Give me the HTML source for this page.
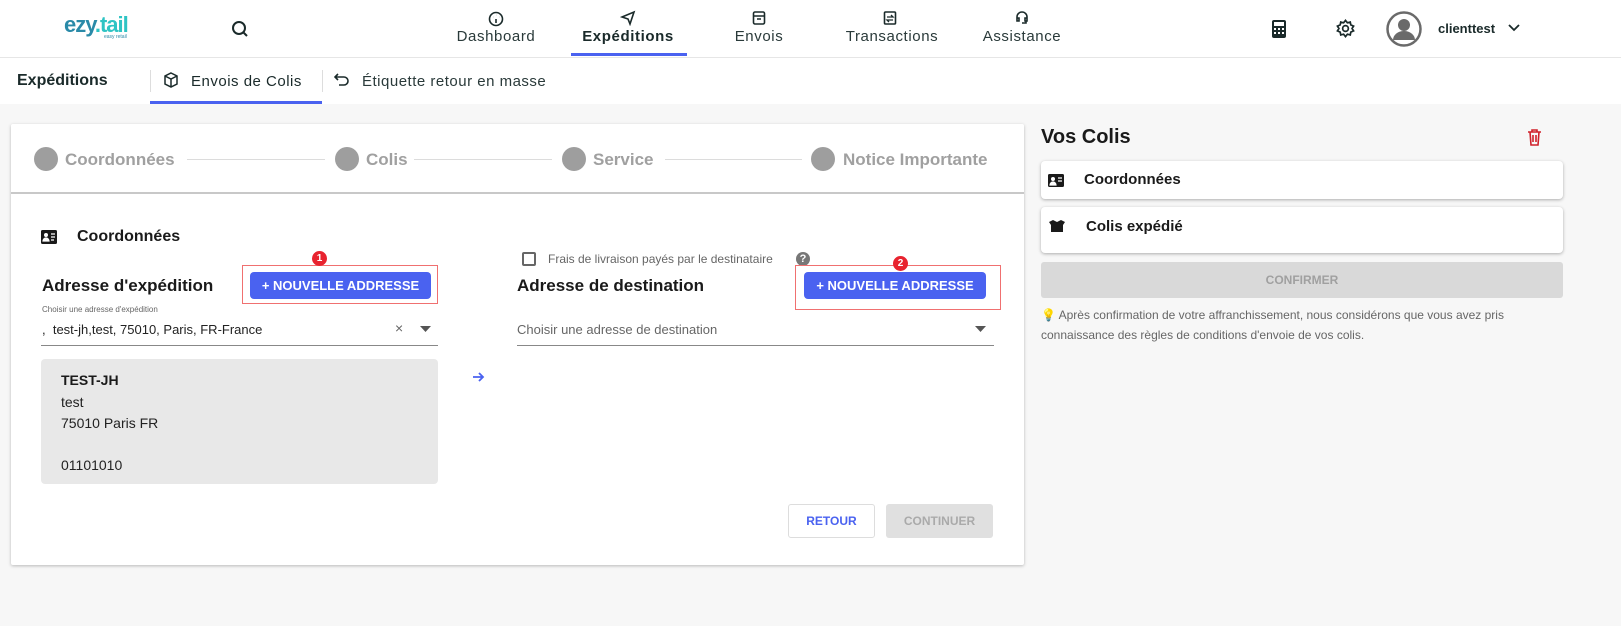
<!DOCTYPE html>
<html><head><meta charset="utf-8"><style>
*{box-sizing:border-box;margin:0;padding:0}
body{width:1621px;height:626px;background:#f7f7f7;font-family:"Liberation Sans",sans-serif;position:relative;overflow:hidden;color:#1a1a1a}
.a{position:absolute}
.hdr{left:0;top:0;width:1621px;height:58px;background:#fff;border-bottom:1px solid #e6e6e6}
.sub{left:0;top:58px;width:1621px;height:46px;background:#fff}
.nav{font-size:15px;color:#2a3a3a;letter-spacing:.6px;text-align:center}
.card{left:11px;top:124px;width:1013px;height:441px;background:#fff;box-shadow:0 1px 3px rgba(0,0,0,.25);border-radius:2px}
.dot{width:24px;height:24px;border-radius:50%;background:#9e9e9e}
.st{font-size:17px;font-weight:bold;color:#a0a0a0}
.ln{height:1px;background:#dcdcdc}
.btn{background:#4a62f0;color:#fff;font-size:13px;font-weight:bold;border-radius:4px;text-align:center;line-height:27px}
.red{border:1px solid #f07070}
.badge{width:15px;height:15px;border-radius:50%;background:#e8232f;color:#fff;font-size:10px;font-weight:bold;text-align:center;line-height:15px}
.rc{background:#fff;border-radius:4px;box-shadow:0 1px 3px rgba(0,0,0,.3)}
</style></head><body>
<div class="a hdr"></div>
<div class="a" style="left:64px;top:12px;font-size:22px;font-weight:bold;color:#2a8aa8;letter-spacing:-1px">ezy<span style="color:#2ec4c4">.tail</span></div>
<div class="a" style="left:104px;top:34px;font-size:5px;color:#2a8aa8">easy retail</div>
<svg class="a" style="left:231px;top:20px" width="18" height="18" viewBox="0 0 18 18"><circle cx="8" cy="8" r="6" fill="none" stroke="#1a2a2a" stroke-width="2"/><path d="M12 12l4 4" stroke="#1a2a2a" stroke-width="2"/></svg>
<div class="a nav" style="left:453px;top:28px;width:86px">Dashboard</div>
<svg class="a" style="left:488px;top:11px" width="16" height="16"><circle cx="8" cy="8" r="6.5" fill="none" stroke="#1a2a2a" stroke-width="1.6"/><path d="M8 8v4M5 6h.1M11 6h.1M8 4h.1" stroke="#1a2a2a" stroke-width="1.6"/></svg>
<div class="a nav" style="left:572px;top:28px;width:112px;font-weight:bold;color:#1a2a2a">Expéditions</div>
<svg class="a" style="left:620px;top:10px" width="16" height="16"><path d="M2 7L14 2 10 14 8 9Z" fill="none" stroke="#1a2a2a" stroke-width="1.6"/></svg>
<div class="a" style="left:571px;top:53px;width:116px;height:3px;background:#4a62f0"></div>
<div class="a nav" style="left:726px;top:28px;width:66px">Envois</div>
<svg class="a" style="left:752px;top:10px" width="14" height="16"><rect x="1.5" y="2" width="11" height="12" rx="1.5" fill="none" stroke="#1a2a2a" stroke-width="1.6"/><path d="M2 6h10M5 9h4" stroke="#1a2a2a" stroke-width="1.5"/></svg>
<div class="a nav" style="left:840px;top:28px;width:104px">Transactions</div>
<svg class="a" style="left:883px;top:10px" width="14" height="16"><rect x="1.5" y="2" width="11" height="12" rx="1" fill="none" stroke="#1a2a2a" stroke-width="1.6"/><path d="M4 7h6l-2-2M10 10H4l2 2" fill="none" stroke="#1a2a2a" stroke-width="1.3"/></svg>
<div class="a nav" style="left:978px;top:28px;width:88px">Assistance</div>
<svg class="a" style="left:1014px;top:10px" width="16" height="16"><path d="M3 10V7a5 5 0 0110 0v3M3 8h2v3H3zM11 8h2v3h-2zM12 11v2H8" fill="none" stroke="#1a2a2a" stroke-width="1.6"/></svg>
<svg class="a" style="left:1271px;top:19px" width="16" height="20"><rect x="1" y="1" width="14" height="18" rx="2" fill="#1a2a2a"/><rect x="3" y="3" width="10" height="4" fill="#fff"/><g fill="#fff"><rect x="3" y="9" width="2" height="2"/><rect x="7" y="9" width="2" height="2"/><rect x="11" y="9" width="2" height="2"/><rect x="3" y="13" width="2" height="2"/><rect x="7" y="13" width="2" height="2"/><rect x="11" y="13" width="2" height="2"/></g></svg>
<svg class="a" style="left:1336px;top:19px" width="19" height="19" viewBox="0 0 20 20"><path d="M10 1.5l2 2.5 3-.8.6 3 2.9 1.3-1.6 2.5 1.6 2.5-2.9 1.3-.6 3-3-.8-2 2.5-2-2.5-3 .8-.6-3L1.5 12.5 3.1 10 1.5 7.5l2.9-1.3.6-3 3 .8z" fill="none" stroke="#1a2a2a" stroke-width="1.8"/><circle cx="10" cy="10" r="3" fill="none" stroke="#1a2a2a" stroke-width="1.8"/></svg>
<svg class="a" style="left:1386px;top:11px" width="36" height="36"><circle cx="18" cy="18" r="16.5" fill="#fff" stroke="#6a6a6a" stroke-width="2.5"/><circle cx="18" cy="14" r="6" fill="#6a6a6a"/><path d="M7 29a11 9 0 0122 0z" fill="#6a6a6a"/></svg>
<div class="a" style="left:1438px;top:21px;font-size:13px;font-weight:bold;color:#1a2a2a">clienttest</div>
<svg class="a" style="left:1507px;top:23px" width="14" height="10"><path d="M2 2l5 5 5-5" fill="none" stroke="#1a2a2a" stroke-width="1.8"/></svg>

<div class="a sub"></div>
<div class="a" style="left:17px;top:72px;font-size:16px;font-weight:bold;color:#1a2a2a">Expéditions</div>
<div class="a" style="left:150px;top:70px;width:1px;height:22px;background:#ddd"></div>
<svg class="a" style="left:163px;top:72px" width="16" height="16"><path d="M8 1l6 3v8l-6 3-6-3V4zM2 4l6 3 6-3M8 7v8" fill="none" stroke="#1a2a2a" stroke-width="1.5"/></svg>
<div class="a" style="left:191px;top:73px;font-size:15px;color:#1a2a2a;letter-spacing:.5px">Envois de Colis</div>
<div class="a" style="left:150px;top:101px;width:172px;height:3px;background:#4a62f0"></div>
<div class="a" style="left:322px;top:70px;width:1px;height:22px;background:#ddd"></div>
<svg class="a" style="left:334px;top:73px" width="16" height="14"><path d="M4 1L1 4l3 3M1 4h9a4 4 0 010 8H5" fill="none" stroke="#1a2a2a" stroke-width="1.6"/></svg>
<div class="a" style="left:362px;top:73px;font-size:15px;color:#2a3a3a;letter-spacing:.5px">Étiquette retour en masse</div>

<div class="a card"></div>
<div class="a" style="left:11px;top:192px;width:1013px;height:2px;background:#c8c8c8"></div>
<div class="a dot" style="left:34px;top:147px"></div><div class="a st" style="left:65px;top:150px">Coordonnées</div>
<div class="a ln" style="left:187px;top:159px;width:138px"></div>
<div class="a dot" style="left:335px;top:147px"></div><div class="a st" style="left:366px;top:150px">Colis</div>
<div class="a ln" style="left:414px;top:159px;width:138px"></div>
<div class="a dot" style="left:562px;top:147px"></div><div class="a st" style="left:593px;top:150px">Service</div>
<div class="a ln" style="left:665px;top:159px;width:137px"></div>
<div class="a dot" style="left:811px;top:147px"></div><div class="a st" style="left:843px;top:150px">Notice Importante</div>

<svg class="a" style="left:41px;top:230px" width="16" height="14"><rect width="16" height="14" rx="1.5" fill="#1a1a1a"/><circle cx="5" cy="5" r="2" fill="#fff"/><path d="M2 11a3 3 0 016 0zM10 4h4M10 7h4M10 10h3" stroke="#fff" stroke-width="1.2" fill="#fff"/></svg>
<div class="a" style="left:77px;top:228px;font-size:16px;font-weight:bold">Coordonnées</div>
<div class="a" style="left:42px;top:276px;font-size:17px;font-weight:bold">Adresse d'expédition</div>
<div class="a red" style="left:242px;top:265px;width:196px;height:39px"></div>
<div class="a btn" style="left:250px;top:272px;width:181px">+ NOUVELLE ADDRESSE</div>
<div class="a badge" style="left:312px;top:251px">1</div>
<div class="a" style="left:42px;top:305px;font-size:8px;color:#666">Choisir une adresse d'expédition</div>
<div class="a" style="left:42px;top:322px;font-size:13px;color:#222">,&nbsp; test-jh,test, 75010, Paris, FR-France</div>
<div class="a" style="left:395px;top:320px;font-size:14px;color:#666">×</div>
<svg class="a" style="left:420px;top:326px" width="12" height="6"><path d="M0 0h11L5.5 6z" fill="#555"/></svg>
<div class="a" style="left:41px;top:345px;width:397px;height:1px;background:#888"></div>
<div class="a" style="left:41px;top:359px;width:397px;height:125px;background:#e8e8e8;border-radius:4px"></div>
<div class="a" style="left:61px;top:372px;font-size:14px;font-weight:bold">TEST-JH</div>
<div class="a" style="left:61px;top:392px;font-size:14px;line-height:21px;color:#222">test<br>75010 Paris FR<br><br>01101010</div>
<svg class="a" style="left:472px;top:371px" width="13" height="12"><path d="M1 6h10M7 2l4 4-4 4" fill="none" stroke="#4a62f0" stroke-width="1.8"/></svg>

<div class="a" style="left:522px;top:252px;width:14px;height:14px;border:2px solid #666;border-radius:2px"></div>
<div class="a" style="left:548px;top:252px;font-size:12px;color:#666">Frais de livraison payés par le destinataire</div>
<div class="a" style="left:796px;top:252px;width:14px;height:14px;border-radius:50%;background:#777;color:#fff;font-size:11px;font-weight:bold;text-align:center;line-height:14px">?</div>
<div class="a" style="left:517px;top:276px;font-size:17px;font-weight:bold">Adresse de destination</div>
<div class="a red" style="left:795px;top:265px;width:206px;height:45px"></div>
<div class="a btn" style="left:804px;top:272px;width:182px">+ NOUVELLE ADDRESSE</div>
<div class="a badge" style="left:893px;top:256px">2</div>
<div class="a" style="left:517px;top:322px;font-size:13px;color:#666">Choisir une adresse de destination</div>
<svg class="a" style="left:975px;top:326px" width="12" height="6"><path d="M0 0h11L5.5 6z" fill="#555"/></svg>
<div class="a" style="left:517px;top:345px;width:477px;height:1px;background:#888"></div>

<div class="a" style="left:788px;top:504px;width:87px;height:34px;border:1px solid #ddd;border-radius:3px;color:#4a62f0;font-size:12px;font-weight:bold;text-align:center;line-height:32px">RETOUR</div>
<div class="a" style="left:886px;top:504px;width:107px;height:34px;background:#e0e0e0;border-radius:3px;color:#aaa;font-size:12px;font-weight:bold;text-align:center;line-height:34px">CONTINUER</div>

<div class="a" style="left:1041px;top:126px;font-size:20px;font-weight:bold">Vos Colis</div>
<svg class="a" style="left:1527px;top:129px" width="15" height="17"><path d="M1 3h13M5 3V1h5v2M3 3l1 13h7l1-13M6 6v7M9 6v7" fill="none" stroke="#d0202a" stroke-width="1.6"/></svg>
<div class="a rc" style="left:1041px;top:161px;width:522px;height:38px"></div>
<svg class="a" style="left:1048px;top:174px" width="16" height="13"><rect width="16" height="13" rx="1.5" fill="#1a1a1a"/><circle cx="5" cy="5" r="2" fill="#fff"/><path d="M2 11a3 3 0 016 0zM10 4h4M10 7h4" stroke="#fff" stroke-width="1.2" fill="#fff"/></svg>
<div class="a" style="left:1084px;top:171px;font-size:15px;font-weight:bold">Coordonnées</div>
<div class="a rc" style="left:1041px;top:207px;width:522px;height:46px"></div>
<svg class="a" style="left:1048px;top:220px" width="18" height="13"><path d="M1 2l4-2 4 2 4-2 4 2-2 3H3zM3 5h12v7H3z" fill="#1a1a1a"/></svg>
<div class="a" style="left:1086px;top:218px;font-size:15px;font-weight:bold">Colis expédié</div>
<div class="a" style="left:1041px;top:262px;width:522px;height:36px;background:#d9d9d9;border-radius:3px;color:#a0a0a0;font-size:12px;font-weight:bold;text-align:center;line-height:36px">CONFIRMER</div>
<div class="a" style="left:1041px;top:305px;width:520px;font-size:12px;line-height:20px;color:#666">💡 Après confirmation de votre affranchissement, nous considérons que vous avez pris connaissance des règles de conditions d'envoie de vos colis.</div>
</body></html>
